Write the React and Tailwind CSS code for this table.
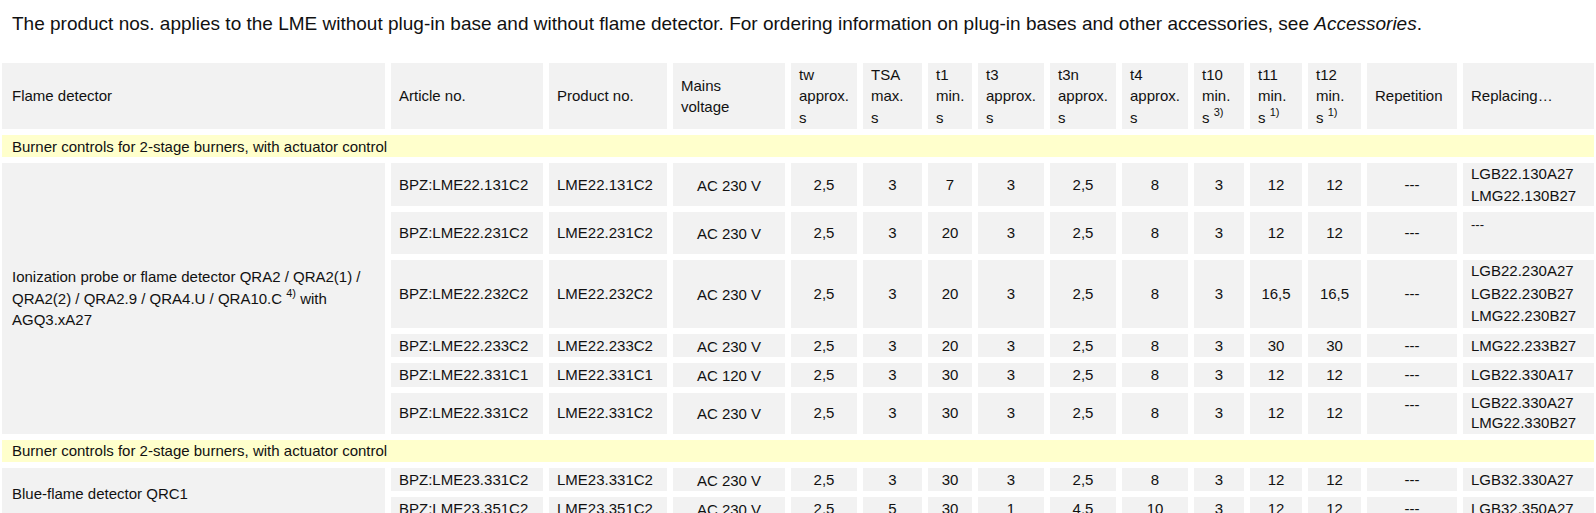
import React from "react";

const cols = [383, 152, 118, 112, 66, 59, 44, 66, 66, 66, 50, 52, 53, 90, 131];

const rowsA = [
  { art: "BPZ:LME22.131C2", prod: "LME22.131C2", v: "AC 230 V", vals: ["2,5", "3", "7", "3", "2,5", "8", "3", "12", "12"], repl: ["LGB22.130A27", "LMG22.130B27"], h: "h-[43px]" },
  { art: "BPZ:LME22.231C2", prod: "LME22.231C2", v: "AC 230 V", vals: ["2,5", "3", "20", "3", "2,5", "8", "3", "12", "12"], repl: ["---"], replTop: true, h: "h-[42px]" },
  { art: "BPZ:LME22.232C2", prod: "LME22.232C2", v: "AC 230 V", vals: ["2,5", "3", "20", "3", "2,5", "8", "3", "16,5", "16,5"], repl: ["LGB22.230A27", "LGB22.230B27", "LMG22.230B27"], h: "h-[67px]", replLead: "leading-[22.5px]" },
  { art: "BPZ:LME22.233C2", prod: "LME22.233C2", v: "AC 230 V", vals: ["2,5", "3", "20", "3", "2,5", "8", "3", "30", "30"], repl: ["LMG22.233B27"], h: "h-[23px]" },
  { art: "BPZ:LME22.331C1", prod: "LME22.331C1", v: "AC 120 V", vals: ["2,5", "3", "30", "3", "2,5", "8", "3", "12", "12"], repl: ["LGB22.330A17"], h: "h-[23px]" },
  { art: "BPZ:LME22.331C2", prod: "LME22.331C2", v: "AC 230 V", vals: ["2,5", "3", "30", "3", "2,5", "8", "3", "12", "12"], repl: ["LGB22.330A27", "LMG22.330B27"], repTop: true, h: "h-[41px]", replLead: "leading-[20.5px]" },
];

const rowsB = [
  { art: "BPZ:LME23.331C2", prod: "LME23.331C2", v: "AC 230 V", vals: ["2,5", "3", "30", "3", "2,5", "8", "3", "12", "12"], repl: ["LGB32.330A27"], h: "h-[23px]" },
  { art: "BPZ:LME23.351C2", prod: "LME23.351C2", v: "AC 230 V", vals: ["2,5", "5", "30", "1", "4,5", "10", "3", "12", "12"], repl: ["LGB32.350A27"], h: "h-[23px]" },
];

const cell = "bg-[#f2f2f2] text-[15px] leading-[21.5px] align-middle";

function Sup({ children }) {
  return <sup className="text-[11px] leading-none relative top-[-1px] align-super">{children}</sup>;
}

function HeadCell({ lines, sup }) {
  return (
    <th className={`${cell} font-normal text-left px-2 py-0`}>
      {lines.map((l, i) => (
        <div key={i}>
          {l}
          {i === lines.length - 1 && sup ? <> <Sup>{sup}</Sup></> : null}
        </div>
      ))}
    </th>
  );
}

function DataRow({ r, first }) {
  return (
    <tr className={r.h}>
      {first}
      <td className={`${cell} px-2`}>{r.art}</td>
      <td className={`${cell} px-2`}>{r.prod}</td>
      <td className={`${cell} px-2 text-center text-[13px] pt-[2px]`}>{r.v}</td>
      {r.vals.map((v, i) => (
        <td key={i} className={`${cell} text-center`}>{v}</td>
      ))}
      <td className={`${cell} text-center text-[13px] ${r.repTop ? "align-top pt-[1px]" : ""}`}>---</td>
      <td className={`${cell} px-2 ${r.replTop ? "align-top pt-[2px]" : ""}`}>
        {r.repl.map((l, i) => (
          <div key={i} className={`${l === "---" ? "text-[13px]" : ""} ${r.replLead || ""}`}>{l}</div>
        ))}
      </td>
    </tr>
  );
}

function SectionRow() {
  return (
    <tr className="h-[22px]">
      <td colSpan={15} className="bg-[#ffffcc] pl-[10px] text-[15px] leading-[21px] align-middle">
        Burner controls for 2-stage burners, with actuator control
      </td>
    </tr>
  );
}

export default function App() {
  return (
    <div className="w-[1596px] h-[513px] overflow-hidden bg-white text-[#111] font-['Liberation_Sans',Arial,sans-serif]">
      <p className="pl-3 pt-[10px] text-[19px] leading-[27px]">
        The product nos. applies to the LME without plug-in base and without flame detector. For ordering information on plug-in bases and other accessories, see <i>Accessories</i>.
      </p>
      <table className="mt-[20px] ml-[-4px] w-[1604px] table-fixed border-separate border-spacing-[6px]">
        <colgroup>
          {cols.map((w, i) => (
            <col key={i} style={{ width: w }} />
          ))}
        </colgroup>
        <thead>
          <tr className="h-[66px]">
            <th className={`${cell} font-normal text-left pl-[10px] pr-2`}>Flame detector</th>
            <HeadCell lines={["Article no."]} />
            <HeadCell lines={["Product no."]} />
            <HeadCell lines={["Mains", "voltage"]} />
            <HeadCell lines={["tw", "approx.", "s"]} />
            <HeadCell lines={["TSA", "max.", "s"]} />
            <HeadCell lines={["t1", "min.", "s"]} />
            <HeadCell lines={["t3", "approx.", "s"]} />
            <HeadCell lines={["t3n", "approx.", "s"]} />
            <HeadCell lines={["t4", "approx.", "s"]} />
            <HeadCell lines={["t10", "min.", "s"]} sup="3)" />
            <HeadCell lines={["t11", "min.", "s"]} sup="1)" />
            <HeadCell lines={["t12", "min.", "s"]} sup="1)" />
            <HeadCell lines={["Repetition"]} />
            <HeadCell lines={["Replacing…"]} />
          </tr>
        </thead>
        <tbody>
          <SectionRow />
          {rowsA.map((r, i) => (
            <DataRow
              key={r.art}
              r={r}
              first={
                i === 0 ? (
                  <td rowSpan={rowsA.length} className={`${cell} pl-[10px] pr-2`}>
                    Ionization probe or flame detector QRA2 / QRA2(1) / QRA2(2) / QRA2.9 / QRA4.U / QRA10.C <Sup>4)</Sup> with AGQ3.xA27
                  </td>
                ) : null
              }
            />
          ))}
          <SectionRow />
          {rowsB.map((r, i) => (
            <DataRow
              key={r.art}
              r={r}
              first={
                i === 0 ? (
                  <td rowSpan={rowsB.length} className={`${cell} pl-[10px] pr-2`}>
                    Blue-flame detector QRC1
                  </td>
                ) : null
              }
            />
          ))}
        </tbody>
      </table>
    </div>
  );
}
